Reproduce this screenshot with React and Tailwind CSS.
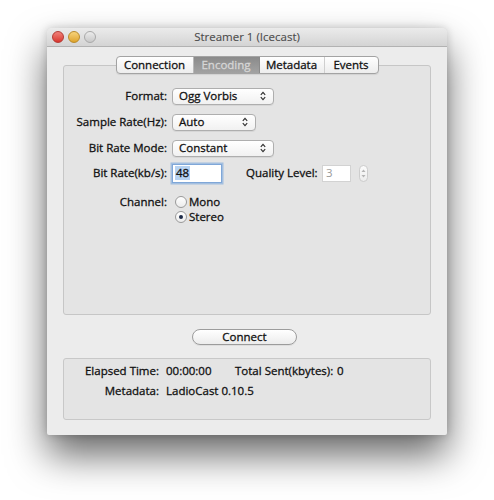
import React from "react";

const font = { fontFamily: '"Open Sans", "Liberation Sans", sans-serif' };

function Arrows({ color = "#333" }) {
  return (
    <svg width="6" height="10" viewBox="0 0 6 10" className="shrink-0">
      <path d="M0.8 3.8 L3 1.4 L5.2 3.8" fill="none" stroke={color} strokeWidth="1.2" />
      <path d="M0.8 6.2 L3 8.6 L5.2 6.2" fill="none" stroke={color} strokeWidth="1.2" />
    </svg>
  );
}

function Popup({ label, w }) {
  return (
    <div
      className={`${w} h-[17px] flex items-center justify-between pl-[6px] pr-[7px] rounded-[4px] border border-[#aeaeae] bg-gradient-to-b from-[#ffffff] to-[#f1f1f1] shadow-[0_1px_0_rgba(0,0,0,0.06)]`}
    >
      <span className="leading-none">{label}</span>
      <Arrows />
    </div>
  );
}

function Radio({ checked }) {
  return (
    <div className="w-[12px] h-[12px] rounded-full border border-[#9a9a9a] bg-gradient-to-b from-[#ffffff] to-[#ececec] flex items-center justify-center shrink-0">
      {checked && <div className="w-[4px] h-[4px] rounded-full bg-[#1d2b48]" />}
    </div>
  );
}

function Light({ from, to, border }) {
  return (
    <div
      className={`w-[12px] h-[12px] rounded-full border ${border} bg-gradient-to-b ${from} ${to}`}
    />
  );
}

export default function App() {
  return (
    <div className="w-[494px] h-[500px] bg-white pt-[28px] pl-[47px] text-[11.5px] text-[#111] [-webkit-text-stroke:0.3px_currentColor]" style={font}>
      <div className="w-[400px] h-[407px] rounded-t-[5px] rounded-b-[2px] bg-[#ececec] shadow-[0_20px_38px_rgba(0,0,0,0.6),0_0_8px_rgba(0,0,0,0.18)] flex flex-col overflow-hidden">
        {/* Title bar */}
        <div className="h-[19px] shrink-0 grid grid-cols-[1fr_auto_1fr] items-center bg-gradient-to-b from-[#ebebeb] to-[#d4d4d4] border-b border-[#b2b2b2]">
          <div className="flex items-center gap-[4px] pl-[5px]">
            <Light from="from-[#f0807a]" to="to-[#d8332d]" border="border-[#b33a34]" />
            <Light from="from-[#f7d37a]" to="to-[#dea428]" border="border-[#b98a2a]" />
            <Light from="from-[#ececec]" to="to-[#c8c8c8]" border="border-[#a8a8a8]" />
          </div>
          <div className="text-[#4a4a4a] text-[11.5px] leading-none [-webkit-text-stroke:0.1px_currentColor]">Streamer 1 (Icecast)</div>
          <div />
        </div>

        {/* Body */}
        <div className="px-[16px] flex flex-col">
          {/* Tab box */}
          <div className="mt-[18px] h-[250px] rounded-[3px] border border-[#c6c6c6] bg-[#e4e4e4] flex flex-col">
            <div className="-mt-[10px] flex justify-center">
              <div className="flex h-[18px] rounded-[4px] border border-[#a3a3a3] bg-gradient-to-b from-[#ffffff] to-[#ededed] overflow-hidden shadow-[0_1px_1px_rgba(0,0,0,0.08)]">
                <div className="w-[77px] flex items-center justify-center border-r border-[#b9b9b9]">Connection</div>
                <div className="w-[66px] flex items-center justify-center bg-gradient-to-b from-[#8a8a8a] to-[#a2a2a2] text-[#d6d6d6] border-r border-[#8a8a8a]">Encoding</div>
                <div className="w-[65px] flex items-center justify-center border-r border-[#cfcfcf]">Metadata</div>
                <div className="w-[53px] flex items-center justify-center">Events</div>
              </div>
            </div>

            <div className="mt-[9px] flex flex-col">
              <div className="h-[26px] flex items-center">
                <div className="w-[104px] text-right pr-[1px]">Format:</div>
                <div className="ml-[4px]"><Popup label="Ogg Vorbis" w="w-[102px]" /></div>
              </div>
              <div className="h-[26px] flex items-center">
                <div className="w-[104px] text-right pr-[1px]">Sample Rate(Hz):</div>
                <div className="ml-[4px]"><Popup label="Auto" w="w-[84px]" /></div>
              </div>
              <div className="h-[26px] flex items-center">
                <div className="w-[104px] text-right pr-[1px]">Bit Rate Mode:</div>
                <div className="ml-[4px]"><Popup label="Constant" w="w-[102px]" /></div>
              </div>
              <div className="h-[24px] flex items-center">
                <div className="w-[104px] text-right pr-[1px]">Bit Rate(kb/s):</div>
                <div className="ml-[4px] w-[50px] h-[19px] bg-white border border-[#7fa7d8] shadow-[0_0_0_1.5px_rgba(110,160,220,0.55)] flex items-center pl-[2px]">
                  <span className="bg-[#b7d3f2] px-[1px] leading-[14px]">48</span>
                </div>
                <div className="ml-[24px] w-[76px]">Quality Level:</div>
                <div className="w-[29px] h-[17px] bg-white border border-[#d2d2d2] flex items-center pl-[3px] text-[#9a9a9a] [-webkit-text-stroke:0px]">3</div>
                <div className="ml-[8px] w-[9px] h-[17px] rounded-full border border-[#cdcdcd] bg-gradient-to-b from-[#fbfbfb] to-[#ededed] flex items-center justify-center">
                  <svg width="5" height="11" viewBox="0 0 5 11">
                    <path d="M0.5 4 L2.5 1.5 L4.5 4 Z" fill="#b4b4b4" />
                    <path d="M0.5 7 L2.5 9.5 L4.5 7 Z" fill="#b4b4b4" />
                  </svg>
                </div>
              </div>
              <div className="mt-[9px] h-[15px] flex items-center">
                <div className="w-[104px] text-right pr-[1px]">Channel:</div>
                <div className="ml-[7px] flex items-center gap-[2px]">
                  <Radio />
                  <span>Mono</span>
                </div>
              </div>
              <div className="h-[15px] flex items-center">
                <div className="w-[104px]" />
                <div className="ml-[7px] flex items-center gap-[2px]">
                  <Radio checked />
                  <span>Stereo</span>
                </div>
              </div>
            </div>
          </div>

          {/* Connect button */}
          <div className="mt-[14px] flex justify-center pr-[5px]">
            <div className="w-[105px] h-[16px] rounded-full border border-[#9c9c9c] bg-gradient-to-b from-[#ffffff] to-[#ececec] flex items-center justify-center shadow-[0_1px_0_rgba(0,0,0,0.06)]">
              Connect
            </div>
          </div>

          {/* Status box */}
          <div className="mt-[13px] h-[62px] rounded-[3px] border border-[#c8c8c8] bg-[#e4e4e4] pt-[2px] flex flex-col">
            <div className="h-[20px] flex items-center">
              <div className="w-[95px] text-right">Elapsed Time:</div>
              <div className="ml-[7px] w-[69px]">00:00:00</div>
              <div className="w-[102px]">Total Sent(kbytes):</div>
              <div>0</div>
            </div>
            <div className="h-[20px] flex items-center">
              <div className="w-[95px] text-right">Metadata:</div>
              <div className="ml-[7px]">LadioCast 0.10.5</div>
            </div>
          </div>
        </div>
      </div>
    </div>
  );
}
